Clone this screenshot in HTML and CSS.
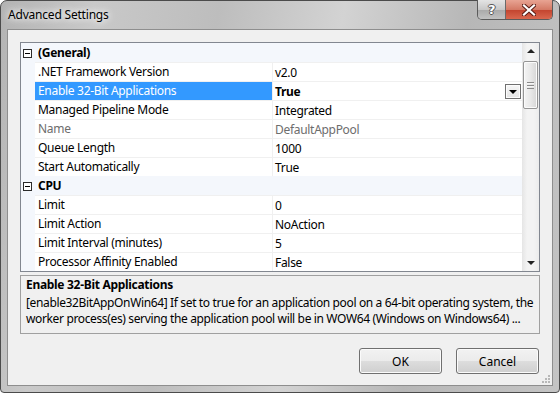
FILE: index.html
```html
<!DOCTYPE html>
<html lang="en">
<head>
    <meta charset="UTF-8">
    <title>Advanced Settings</title>
    <link rel="stylesheet" href="styles.css">
</head>
<body>
    <div class="window">
        <div class="titlebar">
            <span class="title">Advanced Settings</span>
            <div class="caption-buttons">
                <div class="cap-btn help"><span>?</span></div>
                <div class="cap-btn close">
                    <svg width="14" height="12" viewBox="0 0 14 12">
                        <path d="M2 1.5 L12 10.5 M12 1.5 L2 10.5" stroke="#5a1d15" stroke-width="4.2" stroke-linecap="square"/>
                        <path d="M2 1.5 L12 10.5 M12 1.5 L2 10.5" stroke="#fff" stroke-width="2.2" stroke-linecap="square"/>
                    </svg>
                </div>
            </div>
        </div>

        <div class="client">
            <div class="grid">
                <div class="rows">
                    <div class="row category">
                        <span class="gutter"><span class="toggle"></span></span>
                        <span class="cat-name">(General)</span>
                    </div>
                    <div class="row">
                        <span class="gutter"></span>
                        <span class="name">.NET Framework Version</span>
                        <span class="value">v2.0</span>
                    </div>
                    <div class="row selected">
                        <span class="gutter"></span>
                        <span class="name">Enable 32-Bit Applications</span>
                        <span class="value">
                            <b>True</b>
                            <span class="dropdown"></span>
                        </span>
                    </div>
                    <div class="row">
                        <span class="gutter"></span>
                        <span class="name">Managed Pipeline Mode</span>
                        <span class="value">Integrated</span>
                    </div>
                    <div class="row disabled">
                        <span class="gutter"></span>
                        <span class="name">Name</span>
                        <span class="value">DefaultAppPool</span>
                    </div>
                    <div class="row">
                        <span class="gutter"></span>
                        <span class="name">Queue Length</span>
                        <span class="value">1000</span>
                    </div>
                    <div class="row">
                        <span class="gutter"></span>
                        <span class="name">Start Automatically</span>
                        <span class="value">True</span>
                    </div>
                    <div class="row category">
                        <span class="gutter"><span class="toggle"></span></span>
                        <span class="cat-name">CPU</span>
                    </div>
                    <div class="row">
                        <span class="gutter"></span>
                        <span class="name">Limit</span>
                        <span class="value">0</span>
                    </div>
                    <div class="row">
                        <span class="gutter"></span>
                        <span class="name">Limit Action</span>
                        <span class="value">NoAction</span>
                    </div>
                    <div class="row">
                        <span class="gutter"></span>
                        <span class="name">Limit Interval (minutes)</span>
                        <span class="value">5</span>
                    </div>
                    <div class="row">
                        <span class="gutter"></span>
                        <span class="name">Processor Affinity Enabled</span>
                        <span class="value">False</span>
                    </div>
                </div>

                <div class="scrollbar">
                    <div class="arrow up"></div>
                    <div class="thumb"><span class="grip"></span></div>
                    <div class="track"></div>
                    <div class="arrow down"></div>
                </div>
            </div>

            <div class="desc">
                <div class="desc-title">Enable 32-Bit Applications</div>
                <div class="desc-text">[enable32BitAppOnWin64] If set to true for an application pool on a 64-bit operating system, the<br>worker process(es) serving the application pool will be in WOW64 (Windows on Windows64) ...</div>
            </div>

            <div class="buttons">
                <button class="btn">OK</button>
                <button class="btn">Cancel</button>
            </div>

            <svg class="grip-corner" width="8" height="8" viewBox="0 0 8 8">
                <rect x="6" y="0" width="2" height="2" fill="#b8b8b8"/>
                <rect x="3" y="3" width="2" height="2" fill="#b8b8b8"/>
                <rect x="6" y="3" width="2" height="2" fill="#b8b8b8"/>
                <rect x="0" y="6" width="2" height="2" fill="#b8b8b8"/>
                <rect x="3" y="6" width="2" height="2" fill="#b8b8b8"/>
                <rect x="6" y="6" width="2" height="2" fill="#b8b8b8"/>
            </svg>
        </div>
    </div>
</body>
</html>
```

FILE: styles.css
```css
/* Estilos generales */
* {
    margin: 0;
    padding: 0;
    box-sizing: border-box;
}

body {
    font-family: "Segoe UI", "Noto Sans", sans-serif;
    font-size: 12px;
    letter-spacing: -0.3px;
    color: #000;
    background-color: #fff;
}

/* Marco de la ventana */
.window {
    width: 560px;
    height: 393px;
    display: flex;
    flex-direction: column;
    padding: 0 6px 6px 6px;
    border: 1px solid #4b4b4b;
    border-radius: 7px 7px 4px 4px;
    background: linear-gradient(100deg, #b3b3b3 0%, #c9c9c9 15%, #bdbdbd 35%, #d3d3d3 55%, #b7b7b7 75%, #c4c4c4 100%);
}

.titlebar {
    height: 28px;
    display: flex;
    justify-content: space-between;
    align-items: flex-start;
}

.title {
    line-height: 28px;
    padding-left: 1px;
    letter-spacing: -0.2px;
    text-shadow: 0 0 6px #fff, 0 0 10px #fff;
}

.caption-buttons {
    display: flex;
    margin-top: -1px;
    border: 1px solid #5b5b5b;
    border-top: none;
    border-radius: 0 0 5px 5px;
    overflow: hidden;
}

.cap-btn {
    height: 19px;
    display: flex;
    align-items: center;
    justify-content: center;
}

.help {
    width: 28px;
    border-right: 1px solid #6a6a6a;
    background: linear-gradient(#e4e4e4 0%, #c8c8c8 50%, #a9a9a9 51%, #c2c2c2 100%);
}

.help span {
    font-family: "DejaVu Sans", sans-serif;
    font-weight: bold;
    font-size: 13px;
    color: #fff;
    text-shadow: 1px 0 0 #555, -1px 0 0 #555, 0 1px 0 #555, 0 -1px 0 #555;
}

.close {
    width: 46px;
    background: linear-gradient(#e8a493 0%, #d47a66 50%, #c2432e 51%, #d9674e 100%);
}

/* Area cliente */
.client {
    flex: 1;
    position: relative;
    display: flex;
    flex-direction: column;
    padding: 12px 12px 0 12px;
    background-color: #f0f0f0;
    border: 1px solid #8e8e8e;
}

.grid {
    height: 230px;
    display: flex;
    background-color: #fff;
    border: 1px solid #828790;
}

.rows {
    flex: 1;
    overflow: hidden;
}

.row {
    height: 19px;
    display: flex;
}

.gutter {
    width: 14px;
    flex-shrink: 0;
    background-color: #f4f7fc;
    display: flex;
    align-items: center;
    padding-left: 2px;
}

.toggle {
    position: relative;
    width: 9px;
    height: 9px;
    border: 1px solid #2b2b2b;
    background-color: #fff;
    margin-top: 1px;
}

.toggle::after {
    content: "";
    position: absolute;
    left: 1px;
    top: 3px;
    width: 5px;
    height: 1px;
    background-color: #000;
}

.name,
.value,
.cat-name {
    border-top: 1px solid #f0f0f0;
    line-height: 17px;
    white-space: nowrap;
}

.name {
    width: 237px;
    flex-shrink: 0;
    padding-left: 3px;
}

.value {
    flex: 1;
    display: flex;
    justify-content: space-between;
    align-items: center;
    padding-left: 2px;
    border-left: 1px solid #f0f0f0;
}

.category {
    background-color: #f4f7fc;
}

.cat-name {
    flex: 1;
    padding-left: 3px;
    font-weight: bold;
    border-top-color: #f4f7fc;
}

.selected .name {
    background-color: #3399ff;
    color: #fff;
}

.disabled .name,
.disabled .value {
    color: #6d6d6d;
}

.dropdown {
    position: relative;
    width: 16px;
    height: 15px;
    margin-right: 1px;
    border: 1px solid #707070;
    background: linear-gradient(#f6f6f6, #e4e4e4);
    box-shadow: inset 0 0 0 1px #fcfcfc;
}

.dropdown::after {
    content: "";
    position: absolute;
    left: 3px;
    top: 5px;
    border-left: 4px solid transparent;
    border-right: 4px solid transparent;
    border-top: 4px solid #000;
}

/* Barra de desplazamiento */
.scrollbar {
    width: 17px;
    flex-shrink: 0;
    display: flex;
    flex-direction: column;
    background: linear-gradient(to right, #e5e5e5, #f3f3f3 30%, #f3f3f3 70%, #ececec);
}

.arrow {
    height: 17px;
    position: relative;
}

.arrow::after {
    content: "";
    position: absolute;
    left: 5px;
    border-left: 4px solid transparent;
    border-right: 4px solid transparent;
}

.up::after {
    top: 6px;
    border-bottom: 4px solid #222;
}

.down::after {
    top: 7px;
    border-top: 4px solid #222;
}

.thumb {
    height: 48px;
    margin: 1px 1px 0 1px;
    border: 1px solid #959595;
    border-radius: 2px;
    background: linear-gradient(to right, #f4f4f4, #e8e8e8 50%, #d6d6d6);
    box-shadow: inset 0 0 0 1px #fbfbfb;
    display: flex;
    align-items: center;
    justify-content: center;
}

.grip {
    width: 7px;
    height: 7px;
    background: repeating-linear-gradient(#8b8b8b 0 1px, #f6f6f6 1px 2px, transparent 2px 3px);
}

.track {
    flex: 1;
}

/* Descripcion */
.desc {
    height: 59px;
    margin-top: 3px;
    padding: 1px 5px 0 5px;
    border: 1px solid #a0a0a0;
    white-space: nowrap;
    overflow: hidden;
}

.desc-title {
    font-weight: bold;
    line-height: 16px;
    margin-bottom: 2px;
}

.desc-text {
    line-height: 16px;
    letter-spacing: -0.36px;
}

/* Botones */
.buttons {
    display: flex;
    justify-content: flex-end;
    gap: 14px;
    margin-top: 14px;
    padding-right: 1px;
}

.btn {
    width: 83px;
    height: 26px;
    font-family: inherit;
    font-size: 12px;
    letter-spacing: 0;
    color: #000;
    border: 1px solid #707070;
    border-radius: 3px;
    background: linear-gradient(#f2f2f2 0%, #ebebeb 50%, #dddddd 51%, #cfcfcf 100%);
    box-shadow: inset 0 0 0 1px #fbfbfb;
}

.grip-corner {
    position: absolute;
    right: 2px;
    bottom: 2px;
}
```
